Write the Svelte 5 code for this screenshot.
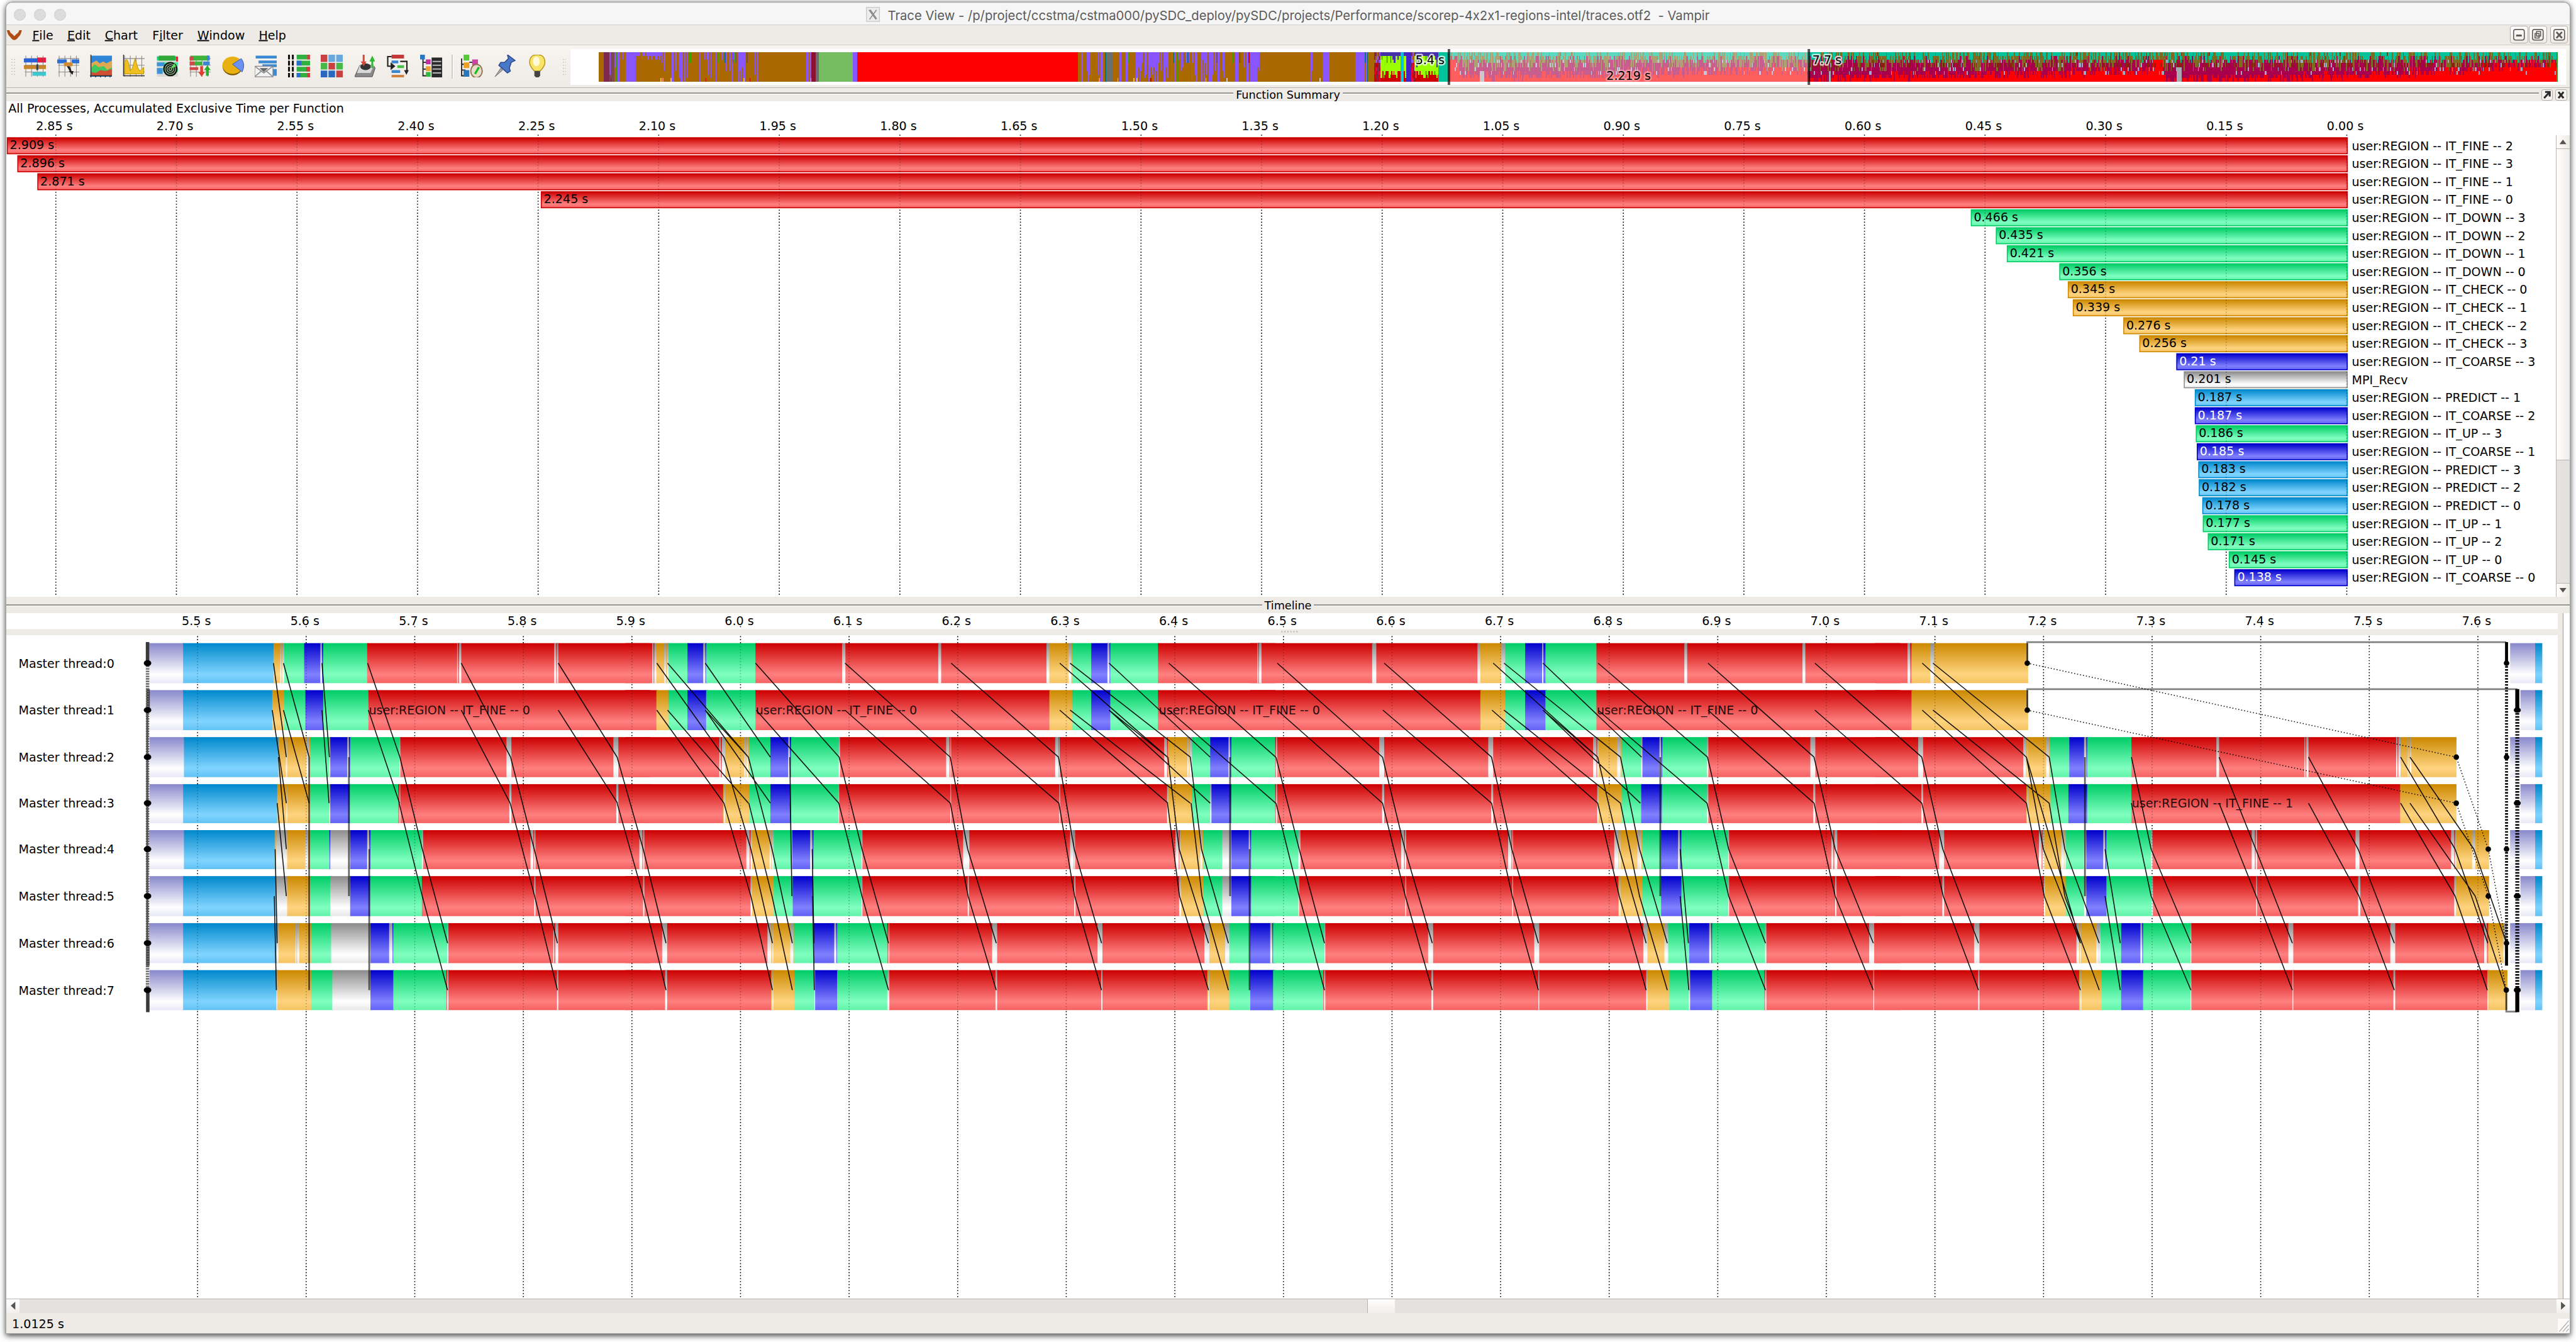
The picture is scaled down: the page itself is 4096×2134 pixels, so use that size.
<script>
  // ---- palette -------------------------------------------------------------
  const tones = {
    R: ['#cc0000', '#ff8080', '#f66161'],
    G: ['#00cc66', '#80ffc0', '#61f3a8'],
    O: ['#cc8800', '#ffd480', '#f4c261'],
    B: ['#0088cc', '#80d4ff', '#61c2f4'],
    C: ['#0000cc', '#8080ff', '#6161f6'],
    M: ['#8c8c8c', '#ffffff', '#e8e8e8'],
    L: ['#8888cc', '#ffffff', '#e8e8f6']
  };

  const menus = ['File', 'Edit', 'Chart', 'Filter', 'Window', 'Help'];
  const menuX = [64, 134, 209, 304, 394, 517];

  // ---- function summary ----------------------------------------------------
  const zeroX = 4693;
  const perSecond = 1607.7;
  const functions = [
    ['2.909', 'user:REGION -- IT_FINE -- 2', 'R'],
    ['2.896', 'user:REGION -- IT_FINE -- 3', 'R'],
    ['2.871', 'user:REGION -- IT_FINE -- 1', 'R'],
    ['2.245', 'user:REGION -- IT_FINE -- 0', 'R'],
    ['0.466', 'user:REGION -- IT_DOWN -- 3', 'G'],
    ['0.435', 'user:REGION -- IT_DOWN -- 2', 'G'],
    ['0.421', 'user:REGION -- IT_DOWN -- 1', 'G'],
    ['0.356', 'user:REGION -- IT_DOWN -- 0', 'G'],
    ['0.345', 'user:REGION -- IT_CHECK -- 0', 'O'],
    ['0.339', 'user:REGION -- IT_CHECK -- 1', 'O'],
    ['0.276', 'user:REGION -- IT_CHECK -- 2', 'O'],
    ['0.256', 'user:REGION -- IT_CHECK -- 3', 'O'],
    ['0.21', 'user:REGION -- IT_COARSE -- 3', 'C'],
    ['0.201', 'MPI_Recv', 'M'],
    ['0.187', 'user:REGION -- PREDICT -- 1', 'B'],
    ['0.187', 'user:REGION -- IT_COARSE -- 2', 'C'],
    ['0.186', 'user:REGION -- IT_UP -- 3', 'G'],
    ['0.185', 'user:REGION -- IT_COARSE -- 1', 'C'],
    ['0.183', 'user:REGION -- PREDICT -- 3', 'B'],
    ['0.182', 'user:REGION -- PREDICT -- 2', 'B'],
    ['0.178', 'user:REGION -- PREDICT -- 0', 'B'],
    ['0.177', 'user:REGION -- IT_UP -- 1', 'G'],
    ['0.171', 'user:REGION -- IT_UP -- 2', 'G'],
    ['0.145', 'user:REGION -- IT_UP -- 0', 'G'],
    ['0.138', 'user:REGION -- IT_COARSE -- 0', 'C']
  ].map(([value, name, tone], i) => ({
    value, name, tone,
    y: 274 + i * 36,
    x: Math.round(zeroX - 3 - Number(value) * perSecond)
  }));
  const summaryTicks = Array.from({ length: 20 }, (_, i) => ({
    x: zeroX - i * 0.15 * perSecond,
    label: (i * 0.15).toFixed(2) + ' s'
  }));

  // ---- timeline ------------------------------------------------------------
  const rowTop = [1286, 1380, 1474, 1568, 1660, 1752, 1846, 1940];
  const rowEnd = [1366, 1460, 1554, 1646, 1738, 1832, 1926, 2020];
  const rowMid = [1326, 1420, 1514, 1606, 1698, 1792, 1886, 1980];
  const timeTicks = Array.from({ length: 22 }, (_, i) => ({
    x: 394.6 + i * 217.17,
    label: (5.5 + i * 0.1).toFixed(1) + ' s'
  }));

  // Each page covers a stretch of the time axis; a run is a tone letter and its start.
  const pages = [
    {
      x0: 0, k: 0.82908, end: 1568,
      rows: [
        'L359 B441 O659 M675 O678 M680 G685 C733 M772 C776 G779 R885 M1102 R1104 M1107 R1112 M1336 R1341 M1343 R1346',
        'L360 B441 O656 G685 C736 G779 R888',
        'L360 B443 O671 M689 O692 M738 O745 G748 M794 C796 M837 C841 G844 M963 R965 M1221 R1233 M1479 R1491',
        'L360 B441 O668 M690 O692 G747 M794 C796 G843 R960 M963 R965 M1228 R1233 M1486 R1491',
        'L359 B443 O662 M665 O692 M736 O742 G747 C794 M796 C844 M885 C890 G893 M1017 R1020 M1279 R1286 M1288 R1291 M1541 R1548 M1550 R1553',
        'L360 B441 M665 O692 G748 M796 C844 G892 R1017 M1288 R1291 M1550 R1553',
        'L359 B441 M667 O671 M712 O714 M716 O721 G750 M798 C893 M938 C946 G948 M1078 R1081 M1334 R1336 M1339 R1346',
        'L360 B441 M666 O668 G750 M801 C893 G948 R1076 M1078 R1081 M1343 R1346'
      ],
      sends: '0,659,2,690|1,656,3,690|0,683,2,745|1,683,3,745|0,776,2,794|1,776,3,793|0,886,2,964|1,888,3,963|2,671,4,690|3,668,5,690|4,663,6,668|5,661,7,666|2,964,4,1018|3,962,5,1018|4,1018,6,1079|5,1018,7,1079|0,1112,2,1231|1,1112,3,1230|2,1231,4,1288|3,1230,5,1289|4,1288,6,1344|5,1289,7,1344|0,1346,2,1488|1,1346,3,1489|2,1488,4,1551|3,1488,5,1551|4,1551,6,1606|5,1551,7,1606',
      direct: '2,745,4,745|3,745,5,745|4,745,6,745|5,745,7,745|2,841,4,841|3,841,5,841|4,890,6,890|5,890,7,890'
    },
    {
      x0: 1250, k: 0.82908, end: 1568,
      rows: [
        'R0 M65 R68 M70 O75 M94 O98 M101 G104 C150 M188 C193 G195 R314 M523 R531 M755 R762 M1016 O1023 M1069 O1076 G1078 C1124 M1163 C1168 G1170 R1285 M1526 R1528 M1531 R1534',
        'R0 O75 G104 C150 G195 R314 O1023 G1078 C1124 G1170 R1285',
        'R0 M227 R230 M233 O241 M287 O290 M292 O297 G299 C350 M393 C397 G400 M515 R518 M774 R782 M784 R786 M1037 R1045 M1046 R1048 M1300 R1307 O1309 M1356 O1359 M1361 G1367 C1411 M1455 C1459 G1462',
        'R0 O236 M238 O241 G299 C350 G399 M514 R516 M784 R786 M1047 R1049 M1307 O1310 G1367 M1411 C1414 G1462',
        'R0 M34 R41 M43 R46 M292 R300 M302 O306 M348 O352 M354 G358 C403 M446 C451 G454 M570 R572 M815 R830 M1073 R1082 M1083 R1085 M1327 R1335 M1337 O1339 M1387 O1392 G1394 M1440 C1462 M1504 C1507 G1510',
        'R0 M43 R46 M302 O306 G358 C404 G453 M570 R572 M826 R829 M1083 R1086 M1336 O1341 G1394 M1440 C1462 G1510',
        'R0 M89 R101 M343 O352 M355 O357 M398 O405 G407 C455 M504 C509 G511 R632 M635 R637 M885 R897 M1139 R1151 M1397 O1409 M1447 G1457 C1508 M1556 C1562 G1565',
        'R0 M96 R101 O352 M355 O357 G408 M456 C458 G511 M632 R637 M893 R897 M1148 R1151 O1404 M1406 O1409 G1457 C1508 G1563'
      ],
      sends: '0,76,2,238|1,76,3,238|0,102,2,297|1,102,3,297|0,193,2,350|1,193,3,350|1,193,2,297|2,397,4,400|3,398,5,402|4,451,6,455|5,452,7,456|0,314,2,516|1,316,3,515|0,530,2,784|1,530,3,784|0,786,2,1045|1,786,3,1046|0,1048,2,1308|1,1048,3,1309|0,1073,2,1363|1,1073,3,1363|0,1167,2,1411|1,1167,3,1411|1,1167,2,1308|0,1311,2,1569|1,1311,3,1569|2,238,4,303|3,238,5,303|4,303,6,355|5,303,7,355|2,297,4,354|3,298,5,354|4,354,6,403|5,354,7,403|2,516,4,571|3,515,5,571|4,571,6,635|5,571,7,635|2,784,4,826|3,784,5,827|4,826,6,895|5,827,7,895|2,1045,4,1083|3,1046,5,1084|4,1083,6,1149|5,1084,7,1149|2,1309,4,1336|3,1308,5,1337|4,1336,6,1407|5,1337,7,1407|2,1363,4,1390|3,1365,5,1391|4,1390,6,1455|5,1391,7,1455',
      direct: '2,1459,4,1459|3,1459,5,1459|4,1506,6,1506|5,1506,7,1506'
    },
    {
      x0: 2500, k: 0.82908, end: 1568,
      rows: [
        'R0 M17 R19 M21 R27 M294 R304 M548 O555 M605 G615 C663 M704 C707 G712 R835 M1047 R1054 M1332 R1339',
        'R0 O555 G615 C663 G712 R835',
        'G0 R60 M62 R65 M311 R323 M574 R586 M827 R835 M837 O840 M885 O893 G896 M943 C946 M987 C991 G994 M1102 R1105 M1351 R1363',
        'G0 R60 M62 R65 M318 R323 M581 R586 M837 O840 G896 C943 G993 M1102 R1105 M1358 R1363',
        'C0 G2 M116 R121 M364 R371 M373 R376 M622 R630 M632 R634 M878 O888 M890 O893 M934 O937 M938 O943 G946 C991 M1032 C1036 G1040 M1153 R1155 M1402 R1406 M1409 R1416',
        'C0 G2 M116 R118 M374 R376 M632 R634 O888 M890 O893 G946 C991 G1040 M1153 R1155 M1411 R1414',
        'C0 M48 C53 G55 M179 R181 M429 R441 M685 R697 M948 O958 M999 G1008 C1059 M1107 C1112 G1114 M1242 R1245 M1493 R1505',
        'C0 G55 R176 M178 R181 M437 R441 M695 R697 M955 O958 G1011 M1058 C1061 G1114 R1240 M1242 R1245 M1503 R1505'
      ],
      sends: '0,65,2,319|1,65,3,319|0,323,2,582|1,320,3,582|0,586,2,838|1,583,3,838|0,612,2,893|1,612,3,893|0,706,2,944|1,706,3,941|1,706,2,838|0,839,2,1103|1,839,3,1102|0,1104,2,1360|1,1104,3,1360|0,1362,2,1620|1,1362,3,1620|2,62,4,118|3,62,5,118|4,118,6,179|5,118,7,179|2,319,4,373|3,319,5,374|4,373,6,439|5,374,7,439|2,582,4,631|3,582,5,632|4,631,6,695|5,632,7,695|2,838,4,890|3,838,5,890|4,890,6,955|5,890,7,955|2,893,4,939|3,893,5,939|4,939,6,1006|5,939,7,1006|4,1037,6,1057|5,1037,7,1058|2,1103,4,1154|3,1102,5,1154|4,1154,6,1243|5,1154,7,1243|2,1360,4,1411|3,1360,5,1411|4,1411,6,1503|5,1411,7,1503',
      direct: '2,989,4,989|3,989,5,989'
    },
    {
      x0: 3750, k: 0.89413, end: 1492,
      rows: [
        'R0 M72 R78 O81 M123 O131 W342 L1420 B1476',
        'R0 O81 W342 L1443 B1476',
        'R0 M96 R107 M331 O337 M339 O341 M382 O389 G391 C434 M467 C472 G474 R573 M763 R769 M960 R962 M964 R969 M1165 R1168 M1170 O1175 M1191 O1193 M1195 O1199 W1300 L1420 B1476',
        'R0 M103 R107 O338 M340 O342 G392 C432 G474 R573 O1174 W1300 L1443 B1476',
        'R0 M143 R154 M366 R372 M374 O378 M416 O422 M423 G426 M466 C472 M510 C514 G517 M617 R620 M842 R849 M851 R854 M1074 R1083 M1288 R1295 M1297 O1299 M1335 O1342 W1373 L1420 B1476',
        'R0 M150 R154 M377 O380 G426 M467 C472 G517 M618 R621 M852 R854 M1080 R1085 M1295 O1299 W1373 L1443 B1476',
        'R0 M221 R233 M450 O456 M458 O460 M494 O500 M501 G504 C550 M593 C597 G599 M705 R707 M924 R935 M1152 R1163 M1362 R1368 O1371 M1405 W1414 L1420 B1476',
        'R0 M230 R233 O456 M459 O461 G506 C550 G599 M705 R707 M933 R935 M1159 R1163 M1369 O1371 W1414 L1443 B1476'
      ],
      sends: '0,105,2,338|1,105,3,338|0,129,2,389|1,129,3,389|2,104,4,151|3,104,5,152|4,151,6,231|5,152,7,231|2,338,4,376|3,338,5,378|4,376,6,459|5,378,7,459|2,338,6,459|2,389,4,424|3,389,5,424|4,424,6,501|5,424,7,501|4,514,6,548|5,514,7,548|2,573,4,617|3,573,5,617|4,617,6,706|5,617,7,706|2,769,4,851|3,769,5,852|4,851,6,933|5,852,7,933|2,969,4,1080|3,969,5,1082|4,1080,6,1161|5,1082,7,1161|2,1175,4,1297|3,1175,5,1297|2,1196,4,1339|3,1196,5,1342|4,1297,6,1370|5,1297,7,1369|4,1339,6,1412|5,1342,7,1411',
      direct: '2,469,4,469|3,469,5,469'
    }
  ];

  const runs = pages.flatMap((p) =>
    p.rows.flatMap((line, row) => {
      const list = line.split(' ').map((s) => ({ tone: s[0], at: +s.slice(1) }));
      return list.flatMap((r, i) => {
        if (r.tone === 'W') return [];
        const next = list[i + 1];
        const stop = next ? next.at : p.end;
        const bleed = next && next.tone !== 'W' ? 2 : 0;
        return [{
          tone: r.tone, row,
          x: p.x0 + r.at * p.k,
          w: (stop - r.at) * p.k + bleed
        }];
      });
    })
  );
  const linesOf = (key) =>
    pages.map((p) =>
      p[key].split('|').map((s) => {
        const [r1, x1, r2, x2] = s.split(',').map(Number);
        return `M${(p.x0 + x1 * p.k).toFixed(1)} ${rowMid[r1]}L${(p.x0 + x2 * p.k).toFixed(1)} ${rowMid[r2]}`;
      }).join('')
    ).join('');
  const sendPath = linesOf('sends');
  const directPath = linesOf('direct');

  const runLabels = [
    [737, 1429, '0'], [1511, 1429, '0'], [2317, 1429, '0'], [3193, 1429, '0'], [4263, 1615, '1']
  ];
  const knots = [
    [4054, 0], [4054, 1], [4912, 2], [4912, 3], [4976, 4], [4976, 5], [5012, 7],
    [5012.5, 0], [5012.5, 2], [5012.5, 4], [5012.5, 6],
    [5034, 1], [5034, 3], [5034, 5], [5034, 7]
  ];

  // ---- overview strip ------------------------------------------------------
  let seed = 20211;
  const rnd = () => {
    seed = (seed * 1664525 + 1013904223) % 4294967296;
    return seed / 4294967296;
  };
  const levels = [104, 112, 120, 126, 134, 142, 150, 156, 164];
  const BR = '#aa6800', PU = '#8855ff', GY = '#6e6e6e', RD = '#ff0000';

  // Solid stretches, and stretches of brown mixed with a share of violet.
  const zones = [
    [1196, 1206, BR], [1206, 1218, '#7e2a4e'], [1218, 1228, 'mix', 0.2, '#7e4a4e'], [1228, 1250, 'mix', 0.45],
    [1250, 1271, PU], [1271, 1320, 'fringe'], [1320, 1400, 'mix', 0.3], [1400, 1514, 'mix', 0.38],
    [1514, 1608, BR], [1608, 1622, 'mix', 0.6], [1622, 1630, '#8c1030'], [1630, 1637, GY],
    [1637, 1704, '#76bd61'], [1704, 1714, PU], [1714, 2155, RD], [2155, 2212, 'mix', 0.28],
    [2212, 2226, GY], [2226, 2250, 'mix', 0.3], [2250, 2500, 'mix', 0.47], [2500, 2512, PU], [2512, 2520, 'mix', 0.4],
    [2520, 2620, BR], [2620, 2632, 'mix', 0.3], [2632, 2644, 'mix', 0.1], [2644, 2658, PU], [2658, 2710, BR],
    [2710, 2729, PU], [2729, 2748, 'mix', 0.25], [2748, 2760, 'hot'], [2760, 2800, 'lime'],
    [2800, 2807, '#00c3e0'], [2807, 2812, 'lime'], [2812, 2822, '#4424c8'], [2822, 2828, 'hot'],
    [2828, 2876, 'lime'], [2876, 2897, '#00c39c'], [2897, 5115, 'late']
  ];
  const odd = ['#00768a', '#7e2a4e', '#006e50', '#cc0000', '#7e4a4e', '#3fa000'];
  const pick = (list) => list[Math.floor(rnd() * list.length)];
  const fade = (hex) => '#' + [1, 3, 5].map((i) =>
    Math.round(parseInt(hex.slice(i, i + 2), 16) * 0.63 + 255 * 0.37).toString(16).padStart(2, '0')).join('');

  function column(zone, x) {
    const kind = zone[2];
    if (kind[0] === '#') return Array(8).fill(kind);
    const c = Array(8).fill(BR);
    if (kind === 'mix') {
      const r = rnd();
      const base = zone[4] && rnd() < 0.6 ? zone[4] : BR;
      c.fill(base);
      if (r < zone[3]) {
        const depth = rnd() < 0.45 ? 8 : 2 + Math.floor(rnd() * 6);
        for (let i = 0; i < depth; i++) c[i] = PU;
      } else if (r > 0.93) {
        const o = pick(odd);
        const depth = rnd() < 0.4 ? 8 : 3;
        for (let i = 0; i < depth; i++) c[i] = o;
      }
      if (rnd() < 0.08) c[7] = pick(['#cc0000', '#ff8080', '#e8c040', '#c8c8d8']);
      return c;
    }
    if (kind === 'fringe') {
      if (rnd() < 0.6) c[0] = PU;
      if (rnd() < 0.1) c[1] = PU;
      return c;
    }
    if (kind === 'hot') {
      return c.map((_, i) => pick(i < 3 ? ['#7e2a4e', BR, PU] : ['#cc0000', '#ee0044', '#7e2a4e']));
    }
    if (kind === 'lime') {
      const top = 1 + Math.floor(rnd() * rnd() * 4);
      const low = 5 + Math.floor(rnd() * 3);
      return c.map((_, i) => (i < top ? '#4630a8' : i < low ? '#99ff00' : '#cc0000'));
    }
    // iteration phase: waiting, coarse and fine work stacked by process count
    let redFrom;
    if (x < 2916) redFrom = 2.5;
    else if (x < 2975) redFrom = 6.2;
    else if (x < 3617) redFrom = 6.6 - ((x - 2975) / 642) * 2.1;
    else if (x < 4305) redFrom = 6.9 - ((x - 3617) / 688) * 1.9;
    else if (x < 4325) redFrom = 1.5;
    else redFrom = 7.4 - Math.pow((x - 4325) / 790, 1.8) * 4.6;
    const t1 = Math.floor(rnd() * 3.3);
    const t2 = Math.max(t1, 1 + Math.floor(rnd() * 4.8));
    const t3 = Math.round(redFrom + (rnd() - 0.5) * 2.6);
    const out = c.map((_, i) =>
      i >= t3 && i > 1 ? RD : i < t1 ? '#00c39c' : i < t2 ? '#7f6a22' : '#a8004c');
    if (x >= 3617 && rnd() < 0.2) out[3] = '#8c2010';
    const n = rnd();
    if (n < 0.2) out[2 + Math.floor(rnd() * 4)] = '#a0a8c8';
    else if (n < 0.28) out[Math.floor(rnd() * 4)] = '#803c10';
    if ((x > 2958 && x < 2967) || (x > 3655 && x < 3661)) for (let i = 5; i < 8; i++) out[i] = '#a8a8b0';
    if (x > 4352 && x < 4363) for (let i = 4; i < 8; i++) out[i] = '#a8a8b0';
    if (x > 5112) out.fill('#20a020');
    return x < 3617 ? out.map(fade) : out;
  }

  const byColour = {};
  for (const zone of zones) {
    for (let x = zone[0]; x < zone[1]; x += 2) {
      const w = zone[2][0] === '#' ? zone[1] - zone[0] : 2;
      const col = column(zone, x);
      let i = 0;
      while (i < 8) {
        let j = i;
        while (j < 8 && col[j] === col[i]) j++;
        byColour[col[i]] = (byColour[col[i]] || '') + `M${x} ${levels[i]}h${w}V${levels[j]}h${-w}z`;
        i = j;
      }
      if (w > 2) break;
    }
  }
  const overview = Object.entries(byColour);
</script>

{#snippet axes()}
  <path d="M2 1v22M8 1v22M14 1v22M20 1v22M1 4h22M1 11h22M1 18h22" stroke="#8a8a8a" stroke-width=".7" />
{/snippet}

{#snippet ledger()}
  <path d="M1 1h22v22H1z" fill="#d8d8d8" />
  <path d="M1 2h22v4H1zM1 8h22v4H1zM1 14h22v4H1z" fill="url(#gG)" />
  <path d="M3 1h17v5H3z" fill="#2fa838" />
{/snippet}

<div class="window">
  <header class="titlebar">
    <div class="lights"><i></i><i></i><i></i></div>
    <div class="caption">
      <svg class="xicon" viewBox="0 0 28 30"><rect x="1" y="1" width="26" height="28" fill="#ededed" stroke="#c4c4c4" stroke-width="1.5" /><path d="M6 6 20 25M21 6 7 25" stroke="#8b8b8b" stroke-width="2" /><path d="M8 6 21 24" stroke="#8b8b8b" stroke-width="3" /></svg>
      <svg class="captiontext" viewBox="0 0 1660 40"><text x="3" y="31" textLength="1644" lengthAdjust="spacingAndGlyphs" xml:space="preserve">Trace View - /p/project/ccstma/cstma000/pySDC_deploy/pySDC/projects/Performance/scorep-4x2x1-regions-intel/traces.otf2&nbsp; - Vampir</text></svg>
    </div>
  </header>

  <nav class="menubar">
    <svg class="menus" viewBox="12 50 700 38">
      <path d="M13 60h5q2 6 6 8l4 4 4-4q4-2 6-8h5q-2 10-7 14-3 5-8 6-5-1-8-6-5-4-7-14z" fill="#b04d12" />
      {#each menus as item, i}
        <text class="t" x={menuX[i]} y="78.5"><tspan text-decoration={item === 'Filter' ? 'none' : 'underline'}>{item[0]}</tspan>{#if item === 'Filter'}<tspan text-decoration="underline">i</tspan>lter{:else}{item.slice(1)}{/if}</text>
      {/each}
    </svg>
    <div class="winbuttons">
      <span class="wb"><svg viewBox="0 0 33 33"><rect x="6" y="6" width="21" height="21" rx="4" /><path d="M11 18h11" class="bold" /></svg></span>
      <span class="wb"><svg viewBox="0 0 33 33"><rect x="6" y="6" width="21" height="21" rx="4" /><path d="M14 10h8v9h-8zM11 14h8v9h-8z" /></svg></span>
      <span class="wb gap"><svg viewBox="0 0 33 33"><rect x="6" y="6" width="21" height="21" rx="4" /><path d="m11 11 11 12M22 11 11 23" class="bold" /></svg></span>
    </div>
  </nav>

  <section class="toolbar">
    <span class="grip"></span>
    <div class="tools">
      <svg viewBox="0 0 24 24">{@render axes()}<path d="M0 4h23v4H0z" fill="#2a62d8" /><path d="M14 3h9v5h-9z" fill="#e02040" /><path d="M0 11h23v4H0z" fill="#c88428" /><path d="M13 10h2v6h-2z" fill="#345" /><path d="M9 18h14v4H9z" fill="#40c8d0" /></svg>
      <svg viewBox="0 0 24 24">{@render axes()}<path d="M0 5h10v4H0zM15 5h8v4h-8z" fill="#2a70d8" /><path d="M7 8h9v4H7z" fill="#d08a30" /><path d="M10 12h3l2 5h2l-1 4-4-4h1z" fill="#222" /></svg>
      <svg viewBox="0 0 24 24"><path d="M1 1h22v22H1z" fill="#2f86d8" /><path d="M1 9l6-3 3 3 4-2 3 2 6-3v12H1z" fill="#e0a850" /><path d="M1 14l4-4 4 3 6-1 3 4 5-3v7H1z" fill="#3fc860" /><path d="M1 18l5 1 5-3 5 1 7-2v7H1z" fill="#d05030" /><path d="M1 0v24M0 22h23M6 22v2M11 22v2M16 22v2M21 22v2" stroke="#333" /></svg>
      <svg viewBox="0 0 24 24">{@render axes()}<path d="M2 20V8q2-6 4 0l2 9 2-3 3-10 3 10 2 3 4-4v7z" fill="#f0c020" stroke="#b89000" stroke-width=".6" /><path d="M1 0v22h22" stroke="#333" fill="none" /></svg>
      <svg viewBox="0 0 24 24">{@render ledger()}<path d="M1 8h8v4H1zM1 14h6v6H1z" fill="#3f92d8" /><ellipse cx="15" cy="15" rx="7.500" ry="7.500" fill="#0c1a0c" /><g fill="none" stroke="#b8d8b8" stroke-width=".7"><circle cx="15" cy="15" r="5.500" /><circle cx="15" cy="15" r="3.500" /><circle cx="15" cy="15" r="1.500" /></g><path d="M15 15l4-6 2 3z" fill="#60e060" /><path d="M21 2h2v5h-2z" fill="#d03030" /></svg>
      <svg viewBox="0 0 24 24">{@render axes()}<path d="M2 1h19v5H2zM5 7h9v4H5z" fill="#3cb43c" /><path d="M1 2h4v4H1zM1 7h5v4H1zM1 13h9v3H1z" fill="#d04848" /><path d="M19 1h3v5h-3zM15 7h7v4h-7z" fill="#3a86d0" /><path d="M12 12h3v6h2l-3.500 5L10 18h2z" fill="#e04030" /><path d="M18 22v-6h-2l3.500-5 3.500 5h-2v6z" fill="#28b028" /></svg>
      <svg viewBox="0 0 24 24"><ellipse cx="11" cy="12" rx="10.500" ry="9.500" fill="#7a5a00" /><ellipse cx="11" cy="11" rx="10.500" ry="9" fill="#e8b010" /><path d="M11 10l9-6q5 6 1 14z" fill="#6a90f0" stroke="#3858b8" stroke-width=".6" /></svg>
      <svg viewBox="0 0 24 24"><path d="M1 1h22v3H1zM4 6h19v3H4zM8 10h15v3H8zM18 15h5v7h-5z" fill="#3a8ad4" /><path d="M0 12h19v11H0z" fill="#f2f2f2" stroke="#888" stroke-width=".8" /><path d="M0 12l9.500 7L19 12M0 23l7-6M19 23l-7-6" fill="none" stroke="#888" /><path d="M5 14h9l-4.500 4z" fill="#666" /></svg>
      <svg viewBox="0 0 24 24"><g fill="#111"><path d="M0 0h2v5H0zM4 0h2v5H4zM0 6.300h2v5H0zM4 6.300h2v5H4zM0 12.600h2v5H0zM4 12.600h2v5H4zM0 19h2v5H0zM4 19h2v5H4z" /></g><path d="M9 0h14v5H9zM9 6.300h14v5H9zM9 12.600h14v5H9zM9 19h14v5H9z" fill="#30b040" /><path d="M9 6.300h5v5H9zM9 19h4v5H9z" fill="#2a70c8" /><path d="M20 0h3v5h-3zM19 12.600h4v5h-4zM20 19h3v5h-3z" fill="#d04040" /></svg>
      <svg viewBox="0 0 24 24"><path d="M0 0h7v8H0zM8 8h7v8H8zM16 16h7v8h-7z" fill="#c84040" /><path d="M8 0h7v8H8zM16 0h7v8h-7z" fill="#68a8e0" /><path d="M0 8h7v8H0zM16 8h7v8h-7z" fill="#48b848" /><path d="M0 16h7v8H0zM8 16h7v8H8z" fill="#2868c0" /><path d="M7.500 0v24M15.500 0v24M0 8h24M0 16h24" stroke="#eee" /></svg>
      <svg viewBox="0 0 24 24"><path d="M1 22L6 11h14l2 3-3 9H1z" fill="#8a8a8a" stroke="#444" stroke-width=".6" /><path d="M6 11h15l-4 8H3z" fill="#d8d8d8" /><ellipse cx="12" cy="12.500" rx="5.500" ry="3.500" fill="#333" /><path d="M9 0v7H7l3 5 3-5h-2V0z" fill="#d84838" /><path d="M18 14V7h-2l3-6 3 6h-2v7z" fill="#30b830" /></svg>
      <svg viewBox="0 0 24 24"><path d="M5 0h13v4H5z" fill="#c83838" /><path d="M5 6h7v3H5z" fill="#3a86d0" /><path d="M11 11h7v3h-7z" fill="#48c048" /><path d="M5 16h9v3H5z" fill="#3a86d0" /><path d="M5 21h13v3H5z" fill="#d08040" /><path d="M5 2H1v10h6M14 7h7v11" fill="none" stroke="#222" stroke-width="1.400" /><path d="M4 8l5 4-5 4zM18 16h5l-2.500 5z" fill="#222" /></svg>
      <svg viewBox="0 0 24 24"><path d="M3 3v19h6M3 8h5M3 15h5" fill="none" stroke="#222" stroke-width="1.200" /><path d="M0 0h5v5H0z" fill="#2878c8" /><path d="M6 5h5v5H6z" fill="#c030a0" /><path d="M6 12h5v5H6z" fill="#f0a030" /><path d="M6 18h5v5H6z" fill="#30b840" /><path d="M12 3h11v21H12z" fill="#2a2a2a" /><path d="M13 7h9M13 11h9M13 15h9M13 19h9" stroke="#b8b8b8" stroke-width="1.300" /></svg>
      <span class="divider"></span>
      <svg viewBox="0 0 24 24"><path d="M2 4v18h5M2 10h4M2 16h4M10 8h5" fill="none" stroke="#222" stroke-width="1.200" /><path d="M4 0h6v6H4z" fill="#58c838" /><path d="M4 8h6v6H4z" fill="#f0a020" /><path d="M4 16h6v7H4z" fill="#2878c0" /><path d="M13 5h6v6h-6z" fill="#d040a8" /><ellipse cx="17.500" cy="17" rx="6" ry="7" fill="#e8dcc8" stroke="#8a7050" stroke-width="1.200" /><path d="M16 20l4-7" stroke="#10c020" stroke-width="2.200" /></svg>
      <svg viewBox="0 0 24 24"><path d="M2 23l6-9 2 2z" fill="#aaa" stroke="#666" stroke-width=".6" /><path d="M15 0l8 6-4 2-2 6 1 3-3 2L6 11l2-3 4 0 4-4z" fill="#4a78c8" stroke="#28488c" stroke-width="1" /></svg>
      <svg viewBox="0 0 24 24"><path d="M12 0q8 0 8 8 0 4-5 9H9Q4 12 4 8q0-8 8-8z" fill="#f8e468" stroke="#b89820" stroke-width="1" /><ellipse cx="11" cy="7" rx="3.500" ry="5" fill="#fffbd8" /><path d="M9 17h6v5l-2 2h-2l-2-2z" fill="#444" /></svg>
    </div>
    <span class="grip second"></span>
    <svg class="overview" viewBox="1140 98 3992 72">
      <rect x="1140" y="98" width="3992" height="72" fill="#fff" />
      <g shape-rendering="crispEdges">
        {#each overview as [colour, d]}<path {d} fill={colour} />{/each}
      </g>
      <path d="M2897 98v72M3617 98v72" stroke="#000" stroke-opacity=".68" stroke-width="5" />
      <text class="halo" x="2830" y="128">5.4 s</text>
      <text class="halo" x="3624" y="128">7.7 s</text>
      <text class="halo soft" x="3212" y="160">2.219 s</text>
    </svg>
  </section>

  <div class="dock first">
    <span class="rule"></span><b>Function Summary</b><span class="rule"></span>
    <span class="db"><svg viewBox="0 0 20 20"><path d="M4 16 14 5M6 4h9v9" /></svg></span>
    <span class="db"><svg viewBox="0 0 20 20"><path d="m5 4 10 12M15 4 5 16" /></svg></span>
  </div>

  <main class="summary">
    <svg viewBox="12 202 5100 992">
      <defs>
        {#each Object.entries(tones) as [key, c]}
          <linearGradient id={'g' + key} x1="0" y1="0" x2="0" y2="1">
            <stop offset="0" stop-color={c[0]} /><stop offset=".78" stop-color={c[1]} /><stop offset="1" stop-color={c[2]} />
          </linearGradient>
        {/each}
      </defs>
      <text class="t" x="16" y="225">All Processes, Accumulated Exclusive Time per Function</text>
      {#each summaryTicks as t}
        <path class="dots" d="M{t.x} 269V1191" />
        <text class="t mid" x={t.x - 3} y="260">{t.label}</text>
      {/each}
      {#each functions as f}
        <rect x={f.x + 1} y={f.y + 1} width={zeroX - f.x} height="32" fill="url(#g{f.tone})" stroke={tones[f.tone][0]} stroke-width="2" />
        <text class="t" class:light={f.tone === 'C'} x={f.x + 6} y={f.y + 24}>{f.value} s</text>
        <text class="t" x="4703" y={f.y + 25.5}>{f.name}</text>
      {/each}
      <g opacity=".28">
        {#each functions as f}
          {#each summaryTicks.filter((t) => t.x > f.x) as t}
            <path class="dots" d="M{t.x} {f.y + 1}v32" />
          {/each}
        {/each}
      </g>
    </svg>
    <div class="vscroll">
      <span class="arrow"><svg viewBox="0 0 27 27"><path d="M13 9l7 9H6z" /></svg></span>
      <span class="thumb"></span>
      <span class="trough"></span>
      <span class="arrow"><svg viewBox="0 0 27 27"><path d="M13 18l7-9H6z" /></svg></span>
    </div>
  </main>

  <div class="dock">
    <span class="rule"></span><b>Timeline</b><span class="rule"></span>
  </div>

  <section class="timeline">
    <svg viewBox="12 1226 5104 1372">
      <rect x="12" y="1258" width="5104" height="12" fill="#eeeae5" />
      <path d="M2562 1263h34" stroke="#b8b3ae" stroke-width="2.500" stroke-dasharray="2.500 3.500" />
      {#each timeTicks as t}
        <path class="dots" d="M{t.x} 1252v3M{t.x} 1272V2598" />
        <text class="t mid" x={t.x - 2.5} y="1250">{t.label}</text>
      {/each}
      {#each runs as r}
        <rect x={r.x} y={rowTop[r.row]} width={r.w} height={rowEnd[r.row] - rowTop[r.row]} fill="url(#g{r.tone})" />
      {/each}
      <g opacity=".28">
        {#each timeTicks as t}
          {#each rowTop as top, row}
            {#if t.x < (row < 2 ? 4055 : row < 4 ? 4912 : 4980)}
              <path class="dots" d="M{t.x} {top}V{rowEnd[row]}" />
            {/if}
          {/each}
        {/each}
      </g>
      {#each rowMid as y, i}
        <text class="t" x="36.5" y={y + 9}>Master thread:{i}</text>
      {/each}
      {#each runLabels as [x, y, n]}
        <text class="t" opacity=".85" {x} {y}>user:REGION -- IT_FINE -- {n}</text>
      {/each}
      <path d={sendPath} class="send" />
      <path d={directPath} class="direct" />

      <path d="M4054 1326V1284H5012M4054 1420V1378H5034M5012 1980V2023H5034" class="wait" />
      <path d="M4054 1326V1286M4054 1420V1380M5012 1980V2020" class="post" />
      <path d="M4054 1326 4912 1514 4976 1698 5012 1886M4054 1420 4912 1606 4976 1792 5012 1980" class="link" />
      <path d="M5012.500 1284v42M5012.500 1886v45" class="bar thin" />
      <path d="M5012.500 1326V1886" class="bar thin dash" />
      <path d="M5034 1378v42M5034 1980v44" class="bar" />
      <path d="M5034 1420V1980" class="bar dash" />
      <path d="M294.500 1284v42M295.500 1378v42M295 1980v44M295 1886v45" class="bar left" />
      <path d="M294.500 1326V1980" class="bar left dash" />
      <path d="M294 1420V1886" stroke="#555" stroke-width="4" />
      {#each rowMid as y}<ellipse cx="294.500" cy={y} rx="7.500" ry="6" />{/each}
      {#each knots as [x, r]}<ellipse cx={x} cy={rowMid[r]} rx={x > 5030 ? 7 : 5.5} ry="5.500" />{/each}
    </svg>
    <div class="edge"></div>
  </section>

  <div class="hscroll">
    <span class="cap"><svg viewBox="0 0 27 26"><path d="M9 13l9-8v16z" /></svg></span>
    <span class="trough a"></span>
    <span class="knob"></span>
    <span class="trough b"></span>
    <span class="cap"><svg viewBox="0 0 27 26"><path d="M18 13l-9-8v16z" /></svg></span>
  </div>

  <footer class="status">
    <span>1.0125 s</span>
    <svg viewBox="0 0 24 28"><rect width="24" height="28" y="0" fill="#fbfaf8" /><path d="M3 26 22 4M10 26 22 12M17 26l5-6" stroke="#a8a4a0" stroke-width="1.500" /></svg>
  </footer>
</div>

<style>
  /* 1rem is ten design units of the 5152-unit wide layout */
  :global(html) { font-size: calc(100vw / 515.2); }
  :global(body) { background: #fff; overflow: hidden; }
  :global(#app) { padding: 0.5rem 1.2rem 1.8rem 1.2rem; }
  .window {
    width: 512.8rem; height: 266.1rem; box-sizing: border-box;
    display: flex; flex-direction: column;
    background: #eeeae5; border-radius: 1.2rem 1.2rem 0 0; overflow: hidden;
    font-family: 'DejaVu Sans', sans-serif; color: #000;
    box-shadow: 0 0 0 0.15rem #a4a4a4, 0 0.3rem 1.2rem 0.1rem rgba(0, 0, 0, .75);
  }
  svg { display: block; fill: none; }
  text { font-family: 'DejaVu Sans', sans-serif; font-size: 24px; fill: #000; }
  text.mid { text-anchor: middle; }
  text.light { fill: #fff; }
  ellipse:not([fill]) { fill: #000; }

  .titlebar { height: 4.5rem; flex: none; display: flex; align-items: center; justify-content: center; background: #f6f6f6; border-bottom: 0.2rem solid #d0cfcd; box-sizing: border-box; border-top: 0.1rem solid #e4e4e4; }
  .lights { display: flex; gap: 1.6rem; padding: 0.3rem 0 0 1.6rem; margin-right: auto; }
  .lights i { width: 2.4rem; height: 2.4rem; border-radius: 50%; background: #dcdcdc; box-sizing: border-box; border: 0.15rem solid #cdcdcd; }
  .caption { display: flex; align-items: center; gap: 1.2rem; margin-right: 170.8rem; padding-top: 0.3rem; }
  .xicon { width: 2.8rem; height: 3rem; }
  .captiontext { width: 166rem; height: 4rem; }
  .captiontext text { font-family: Inter, sans-serif; font-size: 26px; fill: #5c5c5c; font-feature-settings: 'calt' 0; }

  .menubar { height: 4rem; flex: none; display: flex; justify-content: space-between; box-sizing: border-box; border-bottom: 0.2rem solid #d2cdc8; }
  .menus { width: 70rem; height: 3.8rem; }
  .winbuttons { display: flex; gap: 0.2rem; padding: 0.1rem 0.4rem 0 0; }
  .wb { width: 3.6rem; height: 3.6rem; border: 0.15rem solid #b2ada8; border-radius: 0.5rem; box-sizing: border-box; background: linear-gradient(#fff, #eeeae5); }
  .wb.gap { margin-left: 0.4rem; }
  .wb path, .wb rect { stroke: #5e5c5a; stroke-width: 2; }
  .wb .bold { stroke-width: 3.5; }

  .toolbar { height: 8.6rem; flex: none; display: flex; align-items: flex-start; box-sizing: border-box; background: linear-gradient(#f8f5f1, #eeeae5); border-bottom: 0.2rem solid #b5b0ab; }
  .grip { width: 0.8rem; height: 3.6rem; flex: none; margin: 2.6rem 1.8rem 0 1rem; background: radial-gradient(circle, #b8b3ae 0.1rem, transparent 0.13rem) 0 0 / 0.5rem 0.6rem; }
  .grip.second { margin: 2.6rem 0.9rem 0 2.6rem; }
  .tools { display: flex; gap: 2rem; padding-top: 1.9rem; width: 105rem; flex: none; }
  .tools svg { width: 4.6rem; height: 4.6rem; flex: none; }
  .divider { width: 0.2rem; height: 4.8rem; background: #d2ccc6; border-right: 0.1rem solid #fff; margin: 0 -0.7rem 0 -0.2rem; flex: none; }
  .overview { width: 399.2rem; height: 7.2rem; margin: 0.8rem 0 0 auto; padding-right: 0.8rem; flex: none; }
  .halo { paint-order: stroke; stroke: rgba(255, 255, 255, .72); stroke-width: 6px; stroke-linejoin: round; }
  .halo.soft { stroke: rgba(255, 200, 200, .5); }

  .dock { height: 3.2rem; flex: none; display: flex; align-items: center; }
  .dock.first { height: 2.6rem; box-sizing: border-box; border-top: 0.2rem solid #f6f3ef; padding-left: 6.2rem; position: relative; }
  .dock.first .rule:first-child { margin-left: -6.2rem; flex: 1 0 6.2rem; }
  .dock b { font-weight: 400; font-size: 2.22rem; line-height: 2.4rem; padding: 0 0.5rem; margin-top: 0.5rem; }
  .rule { flex: 1; height: 0.2rem; background: #98948f; border-bottom: 0.2rem solid #fff; margin-top: 0.2rem; }
  .dock.first .rule { margin-top: -0.5rem; }
  .dock.first b { margin-top: 0.2rem; }
  .db { width: 2.3rem; height: 2.3rem; margin-left: 0.5rem; box-sizing: border-box; border: 0.15rem solid #b2ada8; border-radius: 0.4rem; background: #f6f4f1; }
  .db + .db { margin-right: 0.6rem; }
  .db path { stroke: #2c2c2c; stroke-width: 3.8; }

  .summary { height: 99.2rem; flex: none; display: flex; background: #fff; }
  .summary > svg { width: 510rem; height: 99.2rem; flex: none; }
  .dots { stroke: #000; stroke-width: 2; stroke-dasharray: 2 4; }
  .vscroll { width: 2.8rem; padding-top: 6.8rem; display: flex; flex-direction: column; box-sizing: border-box; }
  .vscroll > span { border-left: 0.15rem solid #b9b4af; }
  .arrow { height: 2.7rem; background: linear-gradient(90deg, #fff, #eeeae5); box-sizing: border-box; }
  .arrow path, .cap path { fill: #555; }
  .thumb { height: 62.2rem; border-top: 0.2rem solid #b9b4af; background: linear-gradient(90deg, #fff, #efecea); box-sizing: border-box; }
  .trough { background: #e3e2de; }
  .vscroll .trough { flex: 1; border-top: 0.2rem solid #b9b4af; border-bottom: 0.2rem solid #b9b4af; }

  .timeline { height: 137.2rem; flex: none; display: flex; background: #fff; }
  .timeline > svg { width: 510.4rem; height: 137.2rem; flex: none; }
  .edge { width: 0.9rem; background: #eeeae5; border-right: 0.2rem solid #a09c98; }
  .send { stroke: #000; stroke-opacity: .9; stroke-width: 2; }
  .direct { stroke: #000; stroke-opacity: .6; stroke-width: 3.4; }
  .wait { stroke: #808080; stroke-width: 3.5; }
  .post { stroke: #3c2c08; stroke-opacity: .85; stroke-width: 3; }
  .link { stroke: #000; stroke-width: 1.8; stroke-dasharray: 2 4; }
  .bar { stroke: #000; stroke-width: 8; }
  .bar.thin { stroke-width: 6; }
  .bar.left { stroke: #3a3a3a; stroke-width: 7; }
  .bar.dash { stroke-dasharray: 3 3; }
  .bar.left.dash { stroke: #666; stroke-dasharray: 3 2; }

  .hscroll { height: 2.8rem; flex: none; display: flex; box-sizing: border-box; border-top: 0.2rem solid #bab3b0; }
  .cap { width: 2.7rem; background: linear-gradient(#fff, #f2efec); }
  .trough.a { width: 269.5rem; }
  .trough.b { flex: 1; }
  .knob { width: 5.6rem; background: linear-gradient(#fff, #f1eeeb); border-left: 0.2rem solid #bab3b0; box-sizing: border-box; }

  .status { flex: 1; display: flex; justify-content: space-between; align-items: flex-end; font-size: 2.4rem; }
  .status span { padding: 0 0 0.4rem 1.2rem; line-height: 2.8rem; }
  .status svg { width: 2.4rem; height: 2.8rem; }
</style>
